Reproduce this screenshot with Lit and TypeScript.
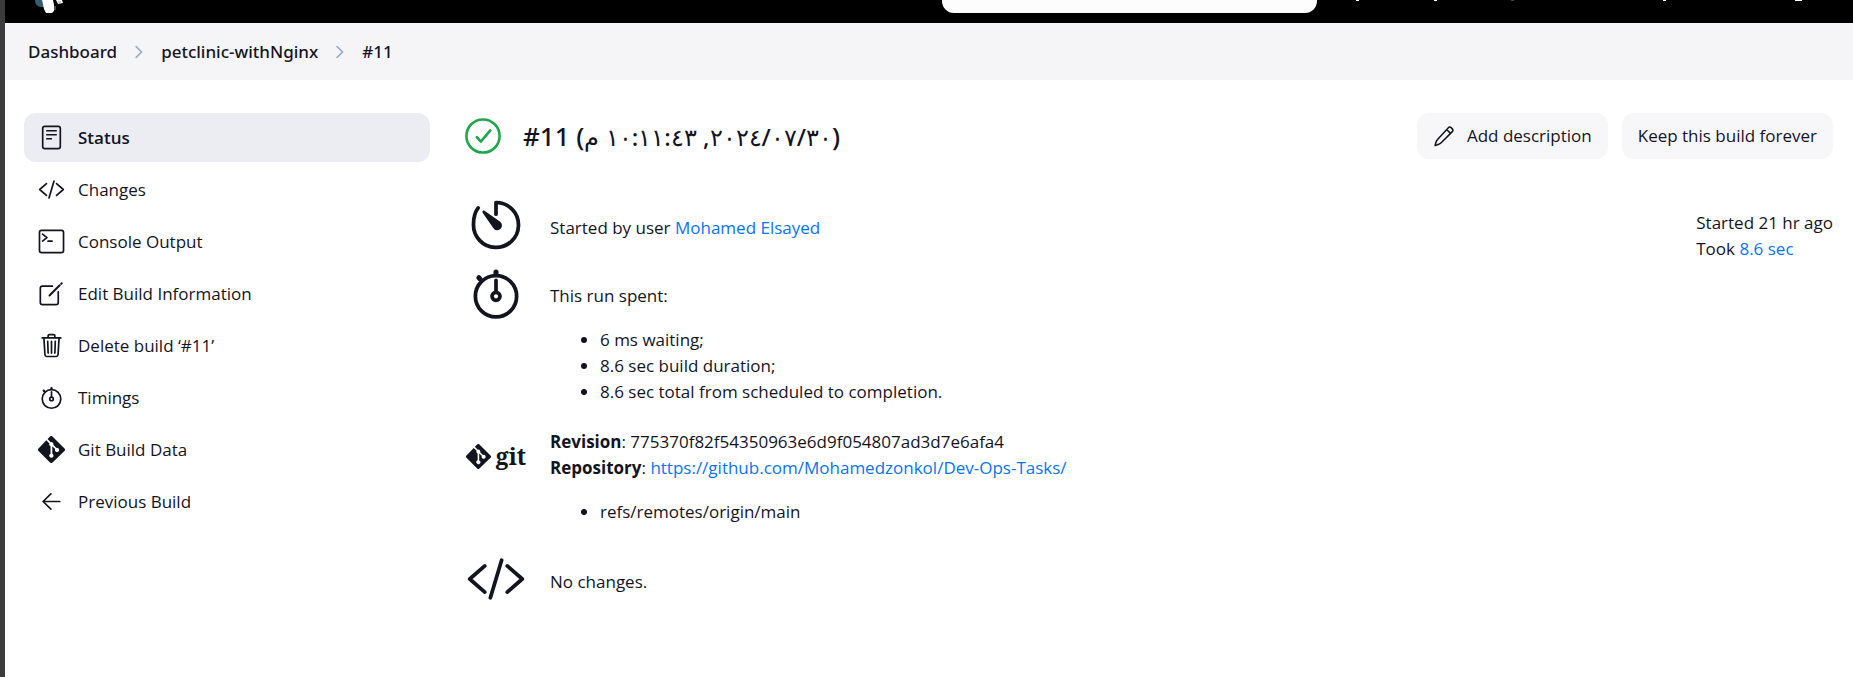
import { LitElement, html, css, svg } from "lit";
import { customElement } from "lit/decorators.js";

const line = (body: unknown) => html`<svg viewBox="0 0 512 512" fill="none" stroke="currentColor" stroke-width="32" stroke-linecap="round" stroke-linejoin="round" aria-hidden="true">${body}</svg>`;

const gitMark = svg`<path fill="currentColor" d="M502 237L275 10a33 33 0 0 0-47 0l-47 47 60 60a40 40 0 0 1 50 51l58 58a40 40 0 1 1-24 22l-54-54v142a40 40 0 1 1-33-1V192a40 40 0 0 1-21-52l-59-59L10 237a33 33 0 0 0 0 47l218 218a33 33 0 0 0 47 0l227-218a33 33 0 0 0 0-47z"/>`;

const icons = {
  status: line(svg`<rect x="89" y="44" width="334" height="423" rx="40"/><path d="M168 128h176M168 204h176M168 280h84"/>`),
  changes: line(svg`<path d="M160 368L32 256l128-112M352 368l128-112-128-112M304 96l-96 320"/>`),
  console: line(svg`<rect x="28" y="44" width="456" height="423" rx="40"/><path d="M86 116l84 66-84 66M190 250h76"/>`),
  edit: line(svg`<path d="M384 224v204a40 40 0 0 1-40 40H84a40 40 0 0 1-40-40V156a40 40 0 0 1 40-40h190"/><path d="M218 294L412 100" stroke-width="38"/><path d="M440 72l10-10" stroke-width="38"/>`),
  trash: line(svg`<path d="M112 112l20 320c1 18 14 32 32 32h184c18 0 31-14 32-32l20-320M80 112h352M192 112V72a24 24 0 0 1 24-24h80a24 24 0 0 1 24 24v40M256 176v224M184 176l8 224M328 176l-8 224"/>`),
  stopwatch: line(svg`<circle cx="256" cy="284" r="176"/><circle cx="256" cy="284" r="34"/><path d="M256 244v-96"/><path d="M256 88V78M118 134l-8-8" stroke-width="44"/>`),
  git: html`<svg viewBox="0 0 512 512" aria-hidden="true">${gitMark}</svg>`,
  back: line(svg`<path d="M244 400L96 256l148-144M106 256h306"/>`),
  timer: line(svg`<path d="M104 110C75 146 64 196 64 250a192 192 0 1 0 198-186h-6v100"/><path fill="currentColor" stroke="none" d="M234 283l-92-132c-3-5-3-11 1-15s10-5 15-1l131 92a40 40 0 1 1-55 56z"/>`),
  pencil: line(svg`<path d="M358 62a45 45 0 0 1 64 0l28 28a45 45 0 0 1 0 64L184 420c-20 20-50 32-78 42l-56 14 14-58c8-28 20-58 42-80zM316 104l92 92" stroke-width="36"/>`),
  success: line(svg`<circle cx="256" cy="256" r="236" stroke-width="36"/><path d="M360 176L225 336l-57-64" stroke-width="36"/>`),
  chevron: html`<svg class="chev" viewBox="0 0 12 16" fill="none" stroke="#98adc4" stroke-width="2" aria-hidden="true"><path d="M2 1l7 7-7 7"/></svg>`,
};

const tasks: [keyof typeof icons, string][] = [
  ["status", "Status"],
  ["changes", "Changes"],
  ["console", "Console Output"],
  ["edit", "Edit Build Information"],
  ["trash", "Delete build ‘#11’"],
  ["stopwatch", "Timings"],
  ["git", "Git Build Data"],
  ["back", "Previous Build"],
];

@customElement("app-root")
export class AppRoot extends LitElement {
  static styles = css`
    :host {
      display: block;
      min-height: 100vh;
      box-sizing: border-box;
      border-left: 5px solid #3b3b3b;
      background: #fff;
      color: #14141f;
      font: 17px/26px "Open Sans", "Noto Sans", sans-serif;
    }
    * { box-sizing: border-box; }
    svg { display: block; flex: none; }
    a { color: #0b74f0; text-decoration: none; }
    .top { display: flex; align-items: flex-start; height: 23px; overflow: hidden; background: #000; padding: 0 48px 0 28px; }
    .logo { width: 32px; height: 13px; }
    .search { width: 375px; height: 13px; margin-left: auto; padding: 0; border: 0; border-radius: 0 0 12px 12px; background: #fdfdfd; }
    .marks { width: 450px; height: 1px; margin-left: 38px; }
    .crumbs { display: flex; align-items: center; gap: 17px; height: 57px; padding: 0 23px; background: #f5f5f8; font-family: "Noto Sans", "Open Sans", sans-serif; font-weight: 500; }
    .crumbs a { color: inherit; }
    .chev { width: 10px; height: 14px; }
    .page { display: grid; grid-template-columns: 406px minmax(0, 1fr); gap: 35px; padding: 33px 20px 0 19px; }
    .tasks { display: flex; flex-direction: column; gap: 3px; }
    .task { display: flex; align-items: center; gap: 13px; height: 49px; padding: 0 14px; border-radius: 12px; color: inherit; }
    .task svg { width: 27px; height: 27px; }
    .task.on { background: #ecedf3; }
    .task.on span { font-weight: 600; }
    .head { display: flex; align-items: flex-start; gap: 14px; }
    .title { display: flex; align-items: center; gap: 22px; margin-right: auto; height: 46px; }
    .title svg { width: 36px; height: 36px; color: #1ea64b; }
    h1 { margin: 0; font: 500 26px/40px "Noto Sans", "Open Sans", sans-serif; }
    .date { font-size: 24px; }
    button { display: flex; align-items: center; gap: 12px; height: 46px; padding: 0 16px; border: 0; border-radius: 12px; background: #f7f7fa; color: inherit; font: inherit; }
    button svg { width: 22px; height: 22px; }
    .body { display: flex; justify-content: space-between; align-items: flex-start; padding-top: 36px; }
    .rows { display: grid; grid-template-columns: 62px auto; gap: 8px 23px; }
    .pic { display: flex; justify-content: center; align-items: flex-start; }
    .pic svg { width: 60px; height: 60px; }
    .cell { padding-top: 20px; }
    .brand { align-items: center; gap: 5px; height: 54px; font: 700 23px/30px "Noto Serif", "DejaVu Serif", "Liberation Serif", serif; }
    .brand svg { width: 25px; height: 25px; }
    ul { margin: 18px 0 16px; padding-left: 50px; }
    .when { padding-top: 15px; }
  `;

  render() {
    return html`
      <header class="top">
        <svg class="logo" viewBox="0 0 32 13" aria-hidden="true">
          <path fill="#335c6e" d="M2 0h10v7H7C4 6 2 4 2 0z"/>
          <path fill="#fff" d="M9 0h11l1 5v6l-2 2h-6l-2-4z"/>
          <path fill="#fff" d="M23 0h6l1 3-5 1z"/>
          <path fill="none" stroke="#999" d="M22 6v4M25 2h3"/>
        </svg>
        <input class="search" type="search" aria-label="Search" />
        <svg class="marks" viewBox="0 0 450 1" aria-hidden="true"><path stroke="#fff" d="M1 .5h3M79 .5h3M308 .5h3M440 .5h7"/><path stroke="#444" d="M156 .5h3"/></svg>
      </header>
      <nav class="crumbs" aria-label="Breadcrumb">
        <a href="#">Dashboard</a>${icons.chevron}<a href="#">petclinic-withNginx</a>${icons.chevron}<a href="#">#11</a>
      </nav>
      <div class="page">
        <nav class="tasks" aria-label="Build">
          ${tasks.map(([icon, label], i) => html`<a class="task ${i ? "" : "on"}" href="#">${icons[icon]}<span>${label}</span></a>`)}
        </nav>
        <main>
          <div class="head">
            <div class="title">${icons.success}<h1>#11 (<span class="date">٣٠‏/٠٧‏/٢٠٢٤, ١٠:١١:٤٣ م</span>)</h1></div>
            <button type="button">${icons.pencil}Add description</button>
            <button type="button">Keep this build forever</button>
          </div>
          <div class="body">
            <div class="rows">
              <div class="pic">${icons.timer}</div>
              <div class="cell">Started by user <a href="#">Mohamed Elsayed</a></div>
              <div class="pic">${icons.stopwatch}</div>
              <div class="cell">This run spent:
                <ul><li>6 ms waiting;</li><li>8.6 sec build duration;</li><li>8.6 sec total from scheduled to completion.</li></ul>
              </div>
              <div class="pic brand">${icons.git}<span>git</span></div>
              <div><b>Revision</b>: 775370f82f54350963e6d9f054807ad3d7e6afa4<br />
                <b>Repository</b>: <a href="#">https://github.com/Mohamedzonkol/Dev-Ops-Tasks/</a>
                <ul><li>refs/remotes/origin/main</li></ul>
              </div>
              <div class="pic">${icons.changes}</div>
              <div class="cell">No changes.</div>
            </div>
            <div class="when">Started 21 hr ago<br />Took <a href="#">8.6 sec</a></div>
          </div>
        </main>
      </div>
    `;
  }
}
